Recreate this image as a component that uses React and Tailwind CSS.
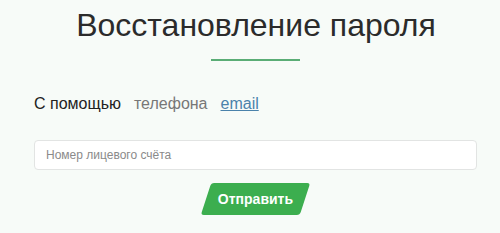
export default function App() {
  return (
    <div className="w-[500px] h-[233px] bg-[#f7fbf8] font-['Liberation_Sans',Arial,sans-serif] overflow-hidden">
      <div className="flex flex-col items-center pt-[5px]">
        <h1 className="ml-[12px] text-[32px] leading-[40px] text-[#2b2b2b] font-normal">
          Восстановление пароля
        </h1>
        <div className="mt-[14px] ml-[10px] w-[89px] h-[2px] bg-[#5aad76]" />
      </div>
      <div className="flex items-center gap-[13px] pl-[34px] mt-[33px] text-[16px] leading-[20px]">
        <span className="text-[#222]">С помощью</span>
        <span className="text-[#777]">телефона</span>
        <a href="#" className="text-[#4a82ab] underline">email</a>
      </div>
      <div className="px-[34px] mt-[26px]">
        <input
          type="text"
          placeholder="Номер лицевого счёта"
          className="w-[443px] h-[30px] rounded-[4px] border border-[#e2e4e3] bg-white px-[11px] text-[12px] placeholder:text-[#8a8a8a] outline-none"
        />
      </div>
      <div className="flex justify-center mt-[13px] pl-[11px]">
        <button className="-skew-x-[18deg] bg-[#3cae4f] rounded-[3px] w-[99px] h-[32px] flex items-center justify-center">
          <span className="skew-x-[18deg] text-white font-bold text-[14px]">Отправить</span>
        </button>
      </div>
    </div>
  );
}
